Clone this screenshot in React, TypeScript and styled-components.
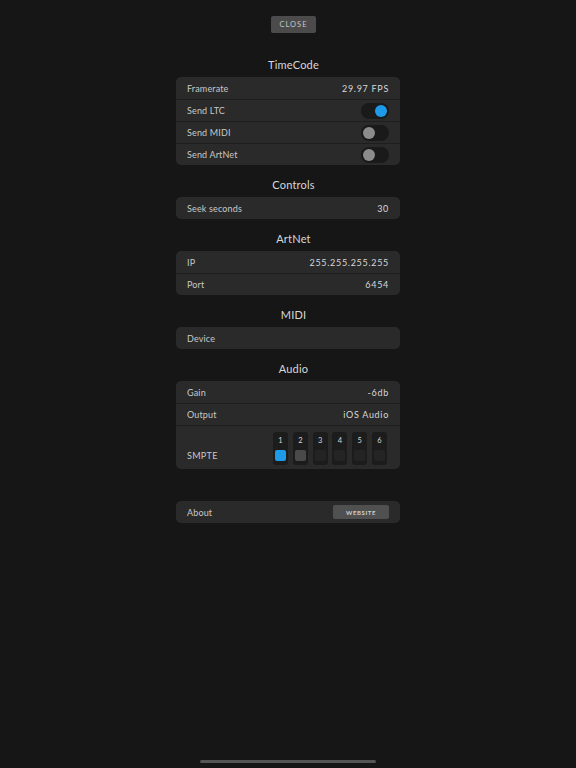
import React from "react"
import styled, { createGlobalStyle } from "styled-components"

const GlobalStyle = createGlobalStyle`
  html, body {
    margin: 0;
    padding: 0;
    background: #161616;
  }
  body {
    font-family: Lato, "Noto Sans", sans-serif;
    color: #d4d4d4;
    -webkit-font-smoothing: antialiased;
  }
`

type SettingRow =
  | { label: string; value?: string }
  | { label: string; toggle: boolean }

const timecodeRows: SettingRow[] = [
  { label: "Framerate", value: "29.97 FPS" },
  { label: "Send LTC", toggle: true },
  { label: "Send MIDI", toggle: false },
  { label: "Send ArtNet", toggle: false },
]

const channels = [
  { n: 1, state: "active" },
  { n: 2, state: "used" },
  { n: 3, state: "idle" },
  { n: 4, state: "idle" },
  { n: 5, state: "idle" },
  { n: 6, state: "idle" },
] as const

const Row = ({ row }: { row: SettingRow }) => (
  <RowBox>
    <Label>{row.label}</Label>
    {"toggle" in row ? (
      <Toggle $on={row.toggle}>
        <Knob $on={row.toggle} />
      </Toggle>
    ) : (
      row.value && <Value>{row.value}</Value>
    )}
  </RowBox>
)

export default function App() {
  return (
    <>
      <GlobalStyle />
      <Page>
        <CloseButton>CLOSE</CloseButton>

        <SectionTitle>TimeCode</SectionTitle>
        <Card>
          {timecodeRows.map((r) => (
            <Row key={r.label} row={r} />
          ))}
        </Card>

        <SectionTitle>Controls</SectionTitle>
        <Card>
          <Row row={{ label: "Seek seconds", value: "30" }} />
        </Card>

        <SectionTitle>ArtNet</SectionTitle>
        <Card>
          <Row row={{ label: "IP", value: "255.255.255.255" }} />
          <Row row={{ label: "Port", value: "6454" }} />
        </Card>

        <SectionTitle>MIDI</SectionTitle>
        <Card>
          <Row row={{ label: "Device" }} />
        </Card>

        <SectionTitle>Audio</SectionTitle>
        <Card>
          <Row row={{ label: "Gain", value: "-6db" }} />
          <Row row={{ label: "Output", value: "iOS Audio" }} />
          <SmpteRow>
            <SmpteLabel>SMPTE</SmpteLabel>
            <Channels>
              {channels.map((c) => (
                <Channel key={c.n}>
                  <ChannelNum>{c.n}</ChannelNum>
                  <ChannelPad $state={c.state} />
                </Channel>
              ))}
            </Channels>
          </SmpteRow>
        </Card>

        <SectionTitle />
        <Card>
          <RowBox>
            <Label>About</Label>
            <WebsiteButton>WEBSITE</WebsiteButton>
          </RowBox>
        </Card>
      </Page>
      <HomeIndicator />
    </>
  )
}

const Page = styled.div`
  width: 224px;
  margin: 0 auto;
  padding-top: 16px;
  display: flex;
  flex-direction: column;
  align-items: stretch;
  height: 768px;
  box-sizing: border-box;
`

const CloseButton = styled.button`
  align-self: flex-start;
  width: 45px;
  height: 17px;
  margin: 0 0 12px 95px;
  padding: 0;
  border: none;
  border-radius: 2px;
  background: #4b4b4b;
  color: #c4c4c4;
  font-family: Lato, "Noto Sans", sans-serif;
  font-size: 7.5px;
  font-weight: 400;
  letter-spacing: 1px;
`

const SectionTitle = styled.div`
  height: 32px;
  padding: 8px 0 0 11px;
  box-sizing: border-box;
  line-height: 24px;
  text-align: center;
  font-size: 11px;
  font-weight: 400;
  letter-spacing: 0.2px;
  color: #d8d8d8;
`

const Card = styled.div`
  background: #2a2a2a;
  border-radius: 5px;
  overflow: hidden;
`

const RowBox = styled.div`
  height: 22px;
  box-sizing: border-box;
  display: flex;
  align-items: center;
  justify-content: space-between;
  padding: 0 11px;
  & + & {
    border-top: 1px solid #1e1e1e;
  }
`

const Label = styled.span`
  font-size: 9px;
  font-weight: 400;
  letter-spacing: 0.15px;
  color: #c8c8c8;
`

const Value = styled.span`
  font-size: 9px;
  font-weight: 400;
  color: #d8d8d8;
  letter-spacing: 0.7px;
`

const Toggle = styled.div<{ $on: boolean }>`
  width: 28px;
  height: 16px;
  border-radius: 8px;
  background: #1a1a1a;
  display: flex;
  align-items: center;
  justify-content: ${(p) => (p.$on ? "flex-end" : "flex-start")};
  padding: 0 2px;
  box-sizing: border-box;
`

const Knob = styled.div<{ $on: boolean }>`
  width: 12px;
  height: 12px;
  border-radius: 50%;
  background: ${(p) => (p.$on ? "#1e9be8" : "#8c8c8c")};
`

const SmpteRow = styled.div`
  height: 44px;
  box-sizing: border-box;
  border-top: 1px solid #1e1e1e;
  display: flex;
  align-items: center;
  justify-content: space-between;
  padding: 0 13px 0 11px;
`

const SmpteLabel = styled.span`
  font-size: 9px;
  font-weight: 400;
  letter-spacing: 0.3px;
  color: #c8c8c8;
  margin-top: 16px;
`

const Channels = styled.div`
  display: flex;
  gap: 4.8px;
  margin-top: 1px;
`

const Channel = styled.div`
  width: 15px;
  height: 33px;
  border-radius: 3px;
  background: #1c1c1c;
  display: flex;
  flex-direction: column;
  align-items: center;
  padding-top: 4px;
  box-sizing: border-box;
`

const ChannelNum = styled.span`
  font-size: 7.5px;
  line-height: 10px;
  color: #d8d8d8;
`

const padColors = {
  active: "#1e9be8",
  used: "#4a4a4a",
  idle: "#242424",
}

const ChannelPad = styled.div<{ $state: keyof typeof padColors }>`
  width: 11px;
  height: 11px;
  margin-top: 4px;
  border-radius: 2px;
  background: ${(p) => padColors[p.$state]};
`

const WebsiteButton = styled.button`
  width: 56px;
  height: 14px;
  padding: 0;
  border: none;
  border-radius: 2px;
  background: #505050;
  color: #cfcfcf;
  font-family: Lato, "Noto Sans", sans-serif;
  font-size: 6px;
  font-weight: 700;
  letter-spacing: 0.6px;
`

const HomeIndicator = styled.div`
  position: fixed;
  left: 200px;
  bottom: 5px;
  width: 176px;
  height: 3px;
  border-radius: 2px;
  background: #555;
`
